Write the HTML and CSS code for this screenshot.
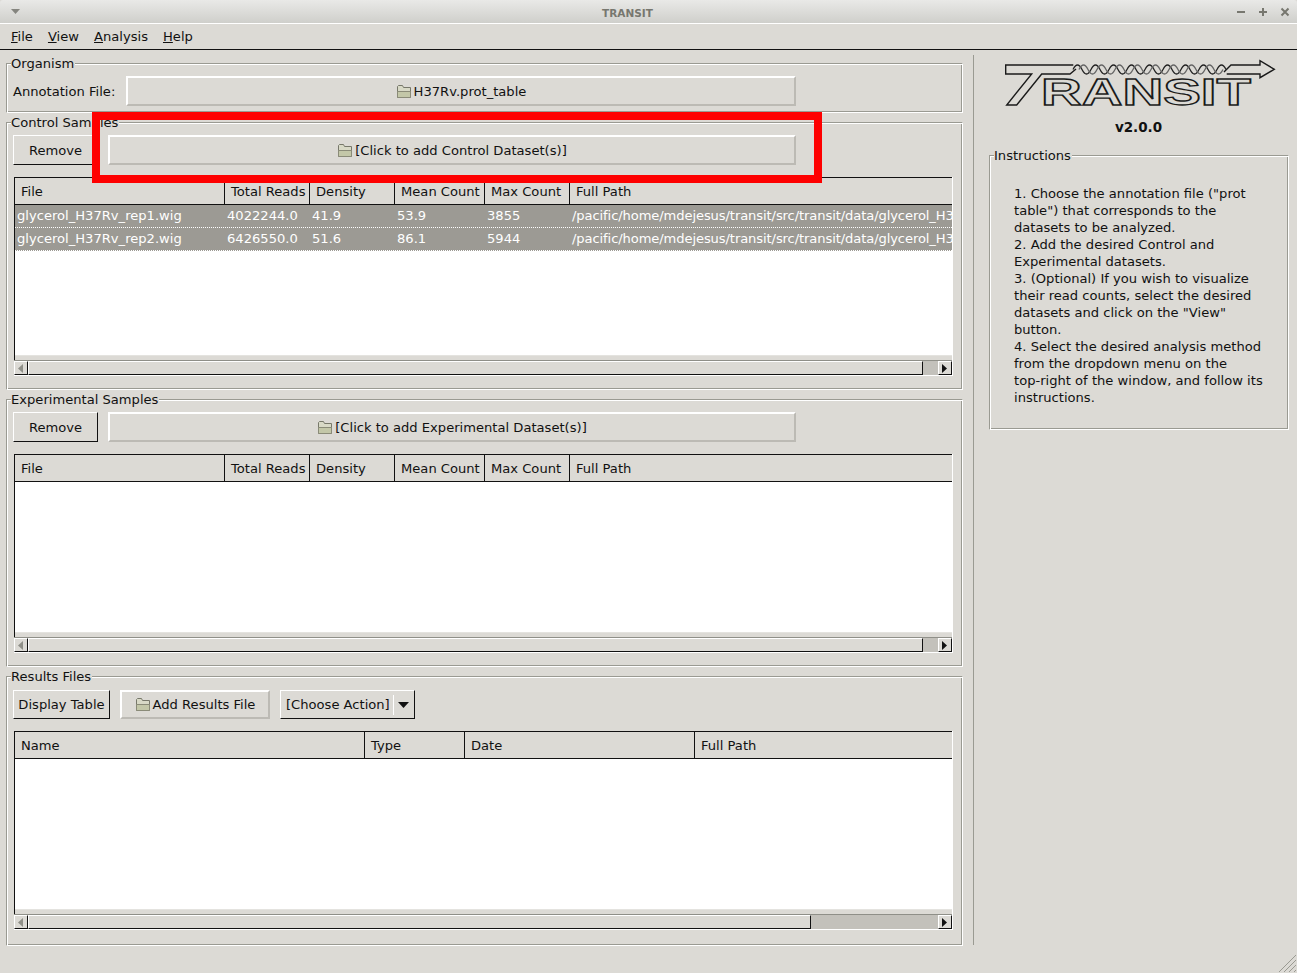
FILE: index.html
```html
<!DOCTYPE html>
<html lang="en">
<head>
    <meta charset="UTF-8">
    <title>TRANSIT</title>
    <link rel="stylesheet" href="styles.css">
</head>
<body>
    <svg class="defs" width="0" height="0">
        <symbol id="folder" viewBox="0 0 16 15">
            <path d="M1.5 13.5V2.5l1-1h4l1 2h7v10z" fill="#d8d9c6" stroke="#77786a"/>
            <path d="M1.5 13.5V7.5h13v6z" fill="#c3c7a8" stroke="#8a8b78"/>
        </symbol>
    </svg>

    <div class="titlebar">
        <svg class="win-menu" width="10" height="6"><path d="M0 0h9L4.5 5z"/></svg>
        <span class="title">TRANSIT</span>
        <div class="win-buttons">
            <svg width="10" height="10"><path d="M1 5h8"/></svg>
            <svg width="10" height="10"><path d="M1 5h8M5 1v8"/></svg>
            <svg width="10" height="10"><path d="M1.5 1.5l7 7M8.5 1.5l-7 7"/></svg>
        </div>
    </div>

    <div class="menubar">
        <span><u>F</u>ile</span>
        <span><u>V</u>iew</span>
        <span><u>A</u>nalysis</span>
        <span><u>H</u>elp</span>
    </div>

    <div class="main">
        <div class="left">
            <fieldset class="group group-organism">
                <legend>Organism</legend>
                <div class="toolbar">
                    <label class="annotation-label">Annotation File:</label>
                    <button class="btn-flat btn-annotation"><svg class="folder"><use href="#folder"/></svg>H37Rv.prot_table</button>
                </div>
            </fieldset>

            <fieldset class="group">
                <legend>Control Samples</legend>
                <div class="toolbar">
                    <button class="btn btn-remove">Remove</button>
                    <button class="btn-flat btn-add"><svg class="folder"><use href="#folder"/></svg>[Click to add Control Dataset(s)]</button>
                </div>
                <div class="list">
                    <div class="row head samples">
                        <div>File</div><div>Total Reads</div><div>Density</div><div>Mean Count</div><div>Max Count</div><div>Full Path</div>
                    </div>
                    <div class="list-body">
                        <div class="row item samples">
                            <div>glycerol_H37Rv_rep1.wig</div><div>4022244.0</div><div>41.9</div><div>53.9</div><div>3855</div><div>/pacific/home/mdejesus/transit/src/transit/data/glycerol_H37Rv_rep1.wig</div>
                        </div>
                        <div class="row item samples">
                            <div>glycerol_H37Rv_rep2.wig</div><div>6426550.0</div><div>51.6</div><div>86.1</div><div>5944</div><div>/pacific/home/mdejesus/transit/src/transit/data/glycerol_H37Rv_rep2.wig</div>
                        </div>
                    </div>
                    <div class="scrollbar">
                        <div class="sb-btn"><svg width="6" height="9"><path class="off" d="M5 0v9L0 4.5z"/></svg></div>
                        <div class="sb-thumb"></div>
                        <div class="sb-trough"></div>
                        <div class="sb-btn"><svg width="6" height="9"><path d="M0 0v9l5-4.5z"/></svg></div>
                    </div>
                </div>
            </fieldset>

            <fieldset class="group">
                <legend>Experimental Samples</legend>
                <div class="toolbar">
                    <button class="btn btn-remove">Remove</button>
                    <button class="btn-flat btn-add"><svg class="folder"><use href="#folder"/></svg>[Click to add Experimental Dataset(s)]</button>
                </div>
                <div class="list">
                    <div class="row head samples">
                        <div>File</div><div>Total Reads</div><div>Density</div><div>Mean Count</div><div>Max Count</div><div>Full Path</div>
                    </div>
                    <div class="list-body"></div>
                    <div class="scrollbar">
                        <div class="sb-btn"><svg width="6" height="9"><path class="off" d="M5 0v9L0 4.5z"/></svg></div>
                        <div class="sb-thumb"></div>
                        <div class="sb-trough"></div>
                        <div class="sb-btn"><svg width="6" height="9"><path d="M0 0v9l5-4.5z"/></svg></div>
                    </div>
                </div>
            </fieldset>

            <fieldset class="group group-results">
                <legend>Results Files</legend>
                <div class="toolbar toolbar-results">
                    <button class="btn btn-display">Display Table</button>
                    <button class="btn-flat btn-results"><svg class="folder"><use href="#folder"/></svg>Add Results File</button>
                    <div class="btn combo">
                        <span class="combo-text">[Choose Action]</span>
                        <span class="combo-arrow"><svg width="11" height="6"><path d="M0 0h11L5.5 6z"/></svg></span>
                    </div>
                </div>
                <div class="list">
                    <div class="row head results">
                        <div>Name</div><div>Type</div><div>Date</div><div>Full Path</div>
                    </div>
                    <div class="list-body"></div>
                    <div class="scrollbar">
                        <div class="sb-btn"><svg width="6" height="9"><path class="off" d="M5 0v9L0 4.5z"/></svg></div>
                        <div class="sb-thumb sb-thumb-short"></div>
                        <div class="sb-trough"></div>
                        <div class="sb-btn"><svg width="6" height="9"><path d="M0 0v9l5-4.5z"/></svg></div>
                    </div>
                </div>
            </fieldset>
        </div>

        <div class="right">
            <svg class="logo" width="272" height="50" viewBox="0 0 272 50">
                <path class="logo-line" d="M69.3 7H1.7V16H27.7L2.7 47H12.7L37.7 16H66L72 11"/>
                <path class="logo-line" d="M220 14L227 7H256V2.7L270.3 11.3 256 19.7V16H222.7"/>
                <path class="logo-wave" d="M69 11.5q4.5-9 9 0t9 0t9 0t9 0t9 0t9 0t9 0t9 0t9 0t9 0t9 0t9 0t9 0t9 0t9 0t9 0t9 0"/>
                <path class="logo-wave logo-wave-back" d="M75 11.5q4.5-9 9 0t9 0t9 0t9 0t9 0t9 0t9 0t9 0t9 0t9 0t9 0t9 0t9 0t9 0t9 0t9 0"/>
                <text class="logo-text" x="37" y="47" textLength="210" lengthAdjust="spacingAndGlyphs">RANSIT</text>
            </svg>
            <div class="version">v2.0.0</div>
            <fieldset class="group group-instructions">
                <legend>Instructions</legend>
                <p>1. Choose the annotation file ("prot<br>
                table") that corresponds to the<br>
                datasets to be analyzed.<br>
                2. Add the desired Control and<br>
                Experimental datasets.<br>
                3. (Optional) If you wish to visualize<br>
                their read counts, select the desired<br>
                datasets and click on the "View"<br>
                button.<br>
                4. Select the desired analysis method<br>
                from the dropdown menu on the<br>
                top-right of the window, and follow its<br>
                instructions.</p>
            </fieldset>
        </div>
    </div>

    <!-- annotation drawn over the screenshot -->
    <div class="highlight"></div>

    <svg class="grip" width="20" height="20">
        <path d="M2 19L19 2M7 19L19 7M12 19l7-7M17 19l2-2"/>
    </svg>
</body>
</html>
```

FILE: styles.css
```css
* {
    box-sizing: border-box;
}
html, body {
    margin: 0;
    height: 100%;
}
body {
    position: relative;
    width: 1297px;
    height: 973px;
    overflow: hidden;
    background-color: #dcdad5;
    color: #111;
    font-family: "DejaVu Sans", sans-serif;
    font-size: 13.1px;
    line-height: 17px;
}
.defs {
    position: absolute;
}

/* window title */
.titlebar {
    position: relative;
    display: flex;
    align-items: center;
    justify-content: center;
    height: 24px;
    padding-top: 3px;
    padding-right: 42px;
    border-bottom: 1px solid #fff;
    border-radius: 3px 3px 0 0;
    background: linear-gradient(#e9e9e7, #cfcfcb);
}
.title {
    color: #77776f;
    font-size: 10.5px;
    font-weight: bold;
}
.win-menu {
    position: absolute;
    left: 11px;
    top: 9px;
    fill: #85857f;
}
.win-buttons {
    position: absolute;
    right: 7px;
    top: 7px;
    display: flex;
    gap: 12px;
}
.win-buttons path {
    fill: none;
    stroke: #77776f;
    stroke-width: 2;
}

/* menu */
.menubar {
    display: flex;
    align-items: center;
    gap: 15px;
    height: 26px;
    padding-left: 11px;
    border-bottom: 1px solid #111;
}

.main {
    display: flex;
    height: 922px;
}
.left {
    display: flex;
    flex-direction: column;
    width: 957px;
    margin-left: 6px;
    padding-top: 5px;
    gap: 1px;
}
.right {
    display: flex;
    flex-direction: column;
    align-items: flex-start;
    width: 315px;
    height: 890px;
    margin-top: 5px;
    margin-left: 10px;
    border-left: 1px solid #9a9a92;
}

/* group boxes */
.group {
    min-width: 0;
    margin: 0;
    padding: 0 6px 13px;
    border: 1px solid;
    border-color: #9a9a92 #fff #fff #9a9a92;
    box-shadow: inset 1px 1px 0 #fff, inset -1px -1px 0 #9a9a92;
}
.group legend {
    margin-left: -2px;
    padding: 0 1px 0 0;
    background-color: #dcdad5;
}
.group-organism {
    height: 58px;
    padding-bottom: 0;
}
.group-results {
    padding-bottom: 15px;
}
.group-instructions {
    width: 300px;
    height: 283px;
    margin-left: 15px;
    margin-top: 11px;
}
.group-instructions p {
    margin: 21px 0 0 18px;
    white-space: nowrap;
}

/* buttons */
.toolbar {
    display: flex;
    gap: 10px;
    margin-top: 4px;
    height: 30px;
}
.toolbar-results {
    margin-top: 5px;
    height: 29px;
}
button, .combo {
    display: flex;
    align-items: center;
    justify-content: center;
    height: 100%;
    padding: 0;
    background-color: #dcdad5;
    color: #111;
    font: inherit;
    white-space: nowrap;
}
.btn {
    border: 1px solid;
    border-color: #fff #111 #111 #fff;
}
.btn-flat {
    border: 2px solid;
    border-color: #fff #bcbab4 #bcbab4 #fff;
}
.folder {
    width: 16px;
    height: 15px;
    margin-right: 2px;
}
.annotation-label {
    display: flex;
    align-items: center;
    flex-shrink: 0;
    width: 103px;
    white-space: nowrap;
}
.btn-annotation {
    width: 670px;
}
.btn-remove {
    width: 85px;
}
.btn-add {
    width: 688px;
}
.btn-display {
    width: 97px;
}
.btn-results {
    width: 150px;
}
.combo {
    width: 135px;
    justify-content: flex-start;
    padding-left: 5px;
}
.combo-text {
    width: 107px;
}
.combo-arrow {
    display: flex;
    align-items: center;
    justify-content: center;
    width: 20px;
    height: 20px;
    border-left: 1px solid #fff;
}
.combo-arrow svg {
    fill: #111;
}

/* lists */
.list {
    width: 938px;
    margin-top: 12px;
    margin-left: 1px;
    border-top: 1px solid #111;
    border-left: 1px solid #111;
    box-shadow: 1px 0 0 #fff;
}
.row {
    display: grid;
    overflow: hidden;
    white-space: nowrap;
}
.samples {
    grid-template-columns: 210px 85px 85px 90px 85px 1fr;
}
.results {
    grid-template-columns: 350px 100px 230px 1fr;
}
.head {
    height: 27px;
    border-bottom: 1px solid #111;
}
.head div {
    height: 26px;
    padding-left: 6px;
    line-height: 27px;
    border-right: 1px solid #111;
    overflow: hidden;
}
.head div:last-child {
    border-right: none;
}
.list-body {
    height: 151px;
    background-color: #fff;
    border-bottom: 1px solid #e4e3df;
}
.item {
    height: 23px;
    background-color: #9c9a94;
    color: #fff;
    line-height: 21px;
    border-bottom: 1px dotted #fff;
}
.item div {
    padding-left: 2px;
    overflow: hidden;
}
.item div:last-child {
    letter-spacing: -0.1px;
}
.scrollbar {
    display: flex;
    height: 16px;
    margin-top: 4px;
    margin-left: -1px;
    border-top: 1px solid #8f8f88;
    border-bottom: 1px solid #fff;
    background-color: #c3c1bb;
}
.sb-btn {
    display: flex;
    align-items: center;
    justify-content: center;
    width: 14px;
    border: 1px solid;
    border-color: #fff #111 #111 #fff;
    background-color: #dcdad5;
}
.sb-btn path {
    fill: #111;
}
.sb-btn path.off {
    fill: #8f8f88;
}
.sb-thumb {
    width: 895px;
    border: 1px solid;
    border-color: #fff #111 #111 #fff;
    background-color: #dcdad5;
}
.sb-thumb-short {
    width: 783px;
}
.sb-trough {
    flex: 1;
}

/* logo column */
.logo {
    margin: 3px 0 0 30px;
}
.logo-line {
    fill: none;
    stroke: #1a1a1a;
    stroke-width: 1.4;
}
.logo-wave {
    fill: none;
    stroke: #222;
    stroke-width: 1.3;
}
.logo-wave-back {
    stroke: #666;
}
.logo-text {
    fill: #dcdad5;
    stroke: #1a1a1a;
    stroke-width: 1.3;
    font-family: "Liberation Sans", sans-serif;
    font-size: 37px;
    font-weight: bold;
}
.version {
    align-self: stretch;
    margin-top: 11px;
    padding-left: 15px;
    text-align: center;
    font-size: 13.5px;
    font-weight: bold;
}

/* red box on top of the window */
.highlight {
    position: absolute;
    left: 92px;
    top: 112px;
    width: 730px;
    height: 71px;
    border: 8px solid #fe0000;
}
.grip {
    position: absolute;
    right: 0;
    bottom: 0;
}
.grip path {
    fill: none;
    stroke: #9a9a92;
}
```
